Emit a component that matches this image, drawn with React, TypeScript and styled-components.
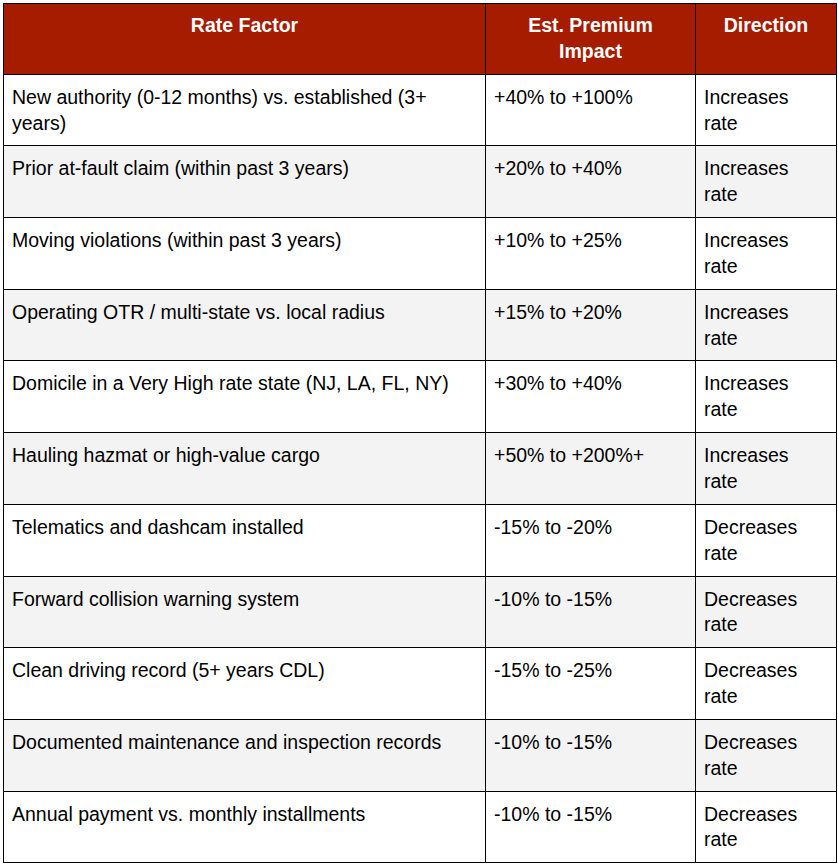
import styled, { createGlobalStyle } from 'styled-components';

const GlobalStyle = createGlobalStyle`
  html, body {
    margin: 0;
    padding: 0;
    background: #ffffff;
  }
`;

const Page = styled.div`
  padding: 3px;
  font-family: 'Liberation Sans', Arial, sans-serif;
  color: #000;
`;

const Table = styled.table`
  width: 833px;
  border-collapse: collapse;
  table-layout: fixed;
  font-size: 19.5px;
  line-height: 25.85px;
`;

const Col = styled.col<{ $width: number }>`
  width: ${(p) => p.$width}px;
`;

const HeadCell = styled.th`
  background: #a61c00;
  color: #fff;
  font-weight: bold;
  text-align: center;
  vertical-align: top;
  padding: 9px 12px 9px;
  border: 1px solid #000;
`;

const Row = styled.tr<{ $shaded: boolean }>`
  background: ${(p) => (p.$shaded ? '#f3f3f3' : '#ffffff')};
`;

const Cell = styled.td`
  vertical-align: top;
  padding: 10px 12px 9px 8px;
  border: 1px solid #000;
`;

const rows: [string, string, string][] = [
  ['New authority (0-12 months) vs. established (3+ years)', '+40% to +100%', 'Increases rate'],
  ['Prior at-fault claim (within past 3 years)', '+20% to +40%', 'Increases rate'],
  ['Moving violations (within past 3 years)', '+10% to +25%', 'Increases rate'],
  ['Operating OTR / multi-state vs. local radius', '+15% to +20%', 'Increases rate'],
  ['Domicile in a Very High rate state (NJ, LA, FL, NY)', '+30% to +40%', 'Increases rate'],
  ['Hauling hazmat or high-value cargo', '+50% to +200%+', 'Increases rate'],
  ['Telematics and dashcam installed', '-15% to -20%', 'Decreases rate'],
  ['Forward collision warning system', '-10% to -15%', 'Decreases rate'],
  ['Clean driving record (5+ years CDL)', '-15% to -25%', 'Decreases rate'],
  ['Documented maintenance and inspection records', '-10% to -15%', 'Decreases rate'],
  ['Annual payment vs. monthly installments', '-10% to -15%', 'Decreases rate'],
];

export default function App() {
  return (
    <Page>
      <GlobalStyle />
      <Table>
        <colgroup>
          <Col $width={482} />
          <Col $width={210} />
          <Col $width={141} />
        </colgroup>
        <thead>
          <tr>
            <HeadCell>Rate Factor</HeadCell>
            <HeadCell>Est. Premium Impact</HeadCell>
            <HeadCell>Direction</HeadCell>
          </tr>
        </thead>
        <tbody>
          {rows.map(([factor, impact, direction], i) => (
            <Row key={factor} $shaded={i % 2 === 1}>
              <Cell>{factor}</Cell>
              <Cell>{impact}</Cell>
              <Cell>{direction}</Cell>
            </Row>
          ))}
        </tbody>
      </Table>
    </Page>
  );
}
